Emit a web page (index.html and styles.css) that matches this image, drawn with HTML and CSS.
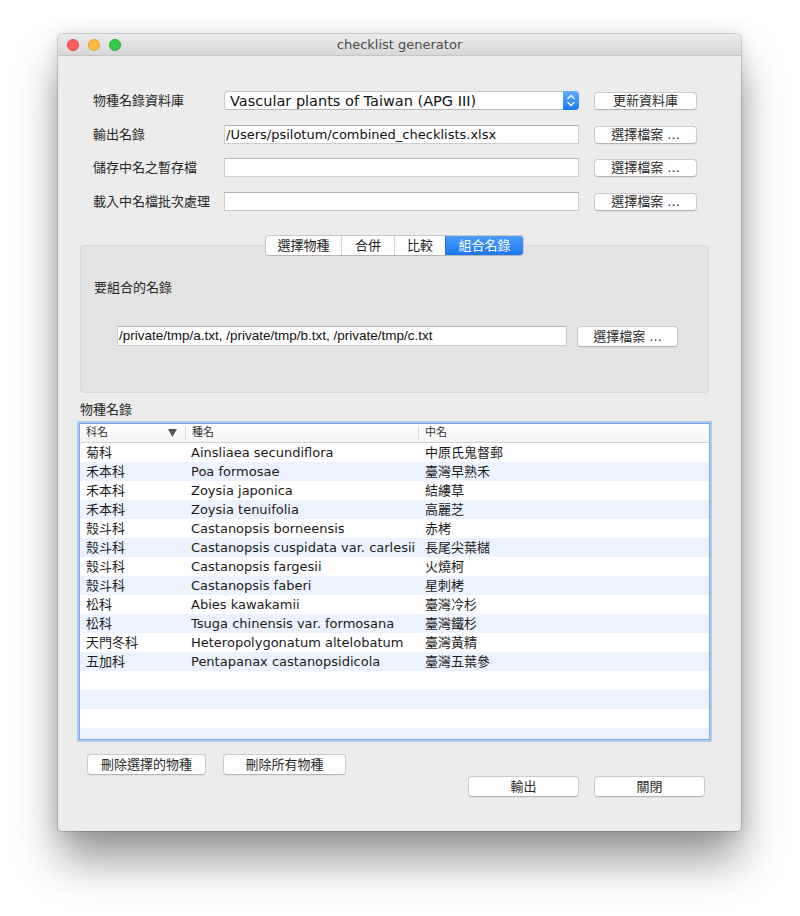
FILE: index.html
```html
<!DOCTYPE html>
<html lang="zh-Hant">
<head>
<meta charset="utf-8">
<title>checklist generator</title>
<link rel="stylesheet" href="styles.css">
</head>
<body>
<div class="window">
  <div class="titlebar">
    <div class="lights">
      <span class="light red"></span>
      <span class="light yellow"></span>
      <span class="light green"></span>
    </div>
    <div class="title">checklist generator</div>
    <div></div>
  </div>
  <div class="content">
    <div class="form">
      <div class="label">物種名錄資料庫</div>
      <div class="popup">
        <span class="popup-text">Vascular plants of Taiwan (APG III)</span>
        <span class="stepper">
          <svg width="16" height="19" viewBox="0 0 16 19"><path d="M5 7.5 L8 4.5 L11 7.5 M5 11.5 L8 14.5 L11 11.5" fill="none" stroke="#fff" stroke-width="1.4" stroke-linecap="round" stroke-linejoin="round"/></svg>
        </span>
      </div>
      <button class="btn form-btn">更新資料庫</button>

      <div class="label">輸出名錄</div>
      <div class="field">/Users/psilotum/combined_checklists.xlsx</div>
      <button class="btn form-btn">選擇檔案 ...</button>

      <div class="label">儲存中名之暫存檔</div>
      <div class="field"></div>
      <button class="btn form-btn">選擇檔案 ...</button>

      <div class="label">載入中名檔批次處理</div>
      <div class="field"></div>
      <button class="btn form-btn">選擇檔案 ...</button>
    </div>

    <div class="tabs">
      <div class="seg-wrap">
        <div class="seg">
          <span class="seg-item w1">選擇物種</span>
          <span class="seg-item w2">合併</span>
          <span class="seg-item w3">比較</span>
          <span class="seg-item w4 on">組合名錄</span>
        </div>
      </div>
      <div class="tabpanel">
        <div class="panel-label">要組合的名錄</div>
        <div class="panel-row">
          <div class="field panel-field">/private/tmp/a.txt, /private/tmp/b.txt, /private/tmp/c.txt</div>
          <button class="btn panel-btn">選擇檔案 ...</button>
        </div>
      </div>
    </div>

    <div class="list-label">物種名錄</div>
    <div class="table">
      <div class="thead">
        <div class="th th1"><span>科名</span><svg width="9" height="8" viewBox="0 0 9 8"><polygon points="0,0 9,0 4.5,8" fill="#555"/></svg></div>
        <div class="th th2">種名</div>
        <div class="th th3">中名</div>
      </div>
      <div class="rows">
        <div class="row"><span>菊科</span><span>Ainsliaea secundiflora</span><span>中原氏鬼督郵</span></div>
        <div class="row"><span>禾本科</span><span>Poa formosae</span><span>臺灣早熟禾</span></div>
        <div class="row"><span>禾本科</span><span>Zoysia japonica</span><span>結縷草</span></div>
        <div class="row"><span>禾本科</span><span>Zoysia tenuifolia</span><span>高麗芝</span></div>
        <div class="row"><span>殼斗科</span><span>Castanopsis borneensis</span><span>赤栲</span></div>
        <div class="row"><span>殼斗科</span><span>Castanopsis cuspidata var. carlesii</span><span>長尾尖葉櫧</span></div>
        <div class="row"><span>殼斗科</span><span>Castanopsis fargesii</span><span>火燒柯</span></div>
        <div class="row"><span>殼斗科</span><span>Castanopsis faberi</span><span>星刺栲</span></div>
        <div class="row"><span>松科</span><span>Abies kawakamii</span><span>臺灣冷杉</span></div>
        <div class="row"><span>松科</span><span>Tsuga chinensis var. formosana</span><span>臺灣鐵杉</span></div>
        <div class="row"><span>天門冬科</span><span>Heteropolygonatum altelobatum</span><span>臺灣黃精</span></div>
        <div class="row"><span>五加科</span><span>Pentapanax castanopsidicola</span><span>臺灣五葉參</span></div>
        <div class="row"><span></span><span></span><span></span></div>
        <div class="row"><span></span><span></span><span></span></div>
        <div class="row"><span></span><span></span><span></span></div>
        <div class="row"><span></span><span></span><span></span></div>
      </div>
    </div>

    <div class="actions">
      <div class="actions-left">
        <button class="btn del1">刪除選擇的物種</button>
        <button class="btn del2">刪除所有物種</button>
      </div>
      <div class="actions-right">
        <button class="btn out">輸出</button>
        <button class="btn close">關閉</button>
      </div>
    </div>
  </div>
</div>
</body>
</html>
```

FILE: styles.css
```css
html, body {
  margin: 0;
  padding: 0;
  background: #ffffff;
}

body {
  font-family: "DejaVu Sans", "Noto Sans CJK TC", sans-serif;
  font-size: 13px;
  color: #141414;
  min-height: 916px;
  padding-top: 34px;
  box-sizing: border-box;
}

.window {
  margin: 0 0 0 58px;
  width: 683px;
  height: 797px;
  background: #ececec;
  border-radius: 5px 5px 4px 4px;
  box-shadow: 0 0 0 1px rgba(0, 0, 0, 0.14), 0 0 18px rgba(0, 0, 0, 0.12), 0 30px 45px -2px rgba(0, 0, 0, 0.42);
  overflow: hidden;
  display: flex;
  flex-direction: column;
}

.titlebar {
  height: 21px;
  flex: none;
  border-bottom: 1px solid #c6c6c6;
  background: linear-gradient(#ebebeb, #d8d8d8);
  display: grid;
  grid-template-columns: 1fr auto 1fr;
  align-items: center;
}

.lights {
  display: flex;
  gap: 9px;
  padding-left: 9px;
}

.light {
  width: 12px;
  height: 12px;
  border-radius: 50%;
  box-sizing: border-box;
}

.red { background: #fc605c; border: 1px solid #e04944; }
.yellow { background: #fdbc40; border: 1px solid #dfa136; }
.green { background: #34c84a; border: 1px solid #26a934; }

.title {
  font-size: 13px;
  color: #4b4b4b;
  line-height: 21px;
}

.content {
  flex: 1;
}

/* top form */
.form {
  display: grid;
  grid-template-columns: 116px 355px 103px;
  grid-auto-rows: 19px;
  column-gap: 15px;
  row-gap: 14.5px;
  align-items: center;
  padding: 35px 0 0 35px;
}

.label {
  color: #262626;
  line-height: 19px;
  white-space: nowrap;
}

.popup {
  height: 19px;
  box-sizing: border-box;
  display: flex;
  align-items: center;
  background: #fff;
  border: 1px solid #c9c9c9;
  border-bottom-color: #b8b8b8;
  border-radius: 4px;
}

.popup-text {
  flex: 1;
  padding-left: 5px;
  font-size: 14.5px;
  color: #111;
  white-space: nowrap;
  overflow: hidden;
}

.stepper {
  width: 16px;
  height: 19px;
  margin: -1px -1px -1px 0;
  border-radius: 0 4px 4px 0;
  background: linear-gradient(#62aefb, #1a7af6);
  display: flex;
}

.field {
  height: 19px;
  box-sizing: border-box;
  background: #fff;
  border: 1px solid #cdcdcd;
  border-top-color: #b3b3b3;
  padding-left: 1px;
  line-height: 17px;
  color: #111;
  white-space: nowrap;
  overflow: hidden;
}

.btn {
  font-family: "DejaVu Sans", "Noto Sans CJK TC", sans-serif;
  font-size: 13px;
  color: #2a2a2a;
  background: #fff;
  border: 1px solid #cbcbcb;
  border-bottom-color: #b3b3b3;
  border-radius: 4px;
  padding: 0;
  box-sizing: border-box;
  box-shadow: 0 1px 0 rgba(0, 0, 0, 0.04);
  white-space: nowrap;
}

.form-btn {
  height: 18px;
  line-height: 16px;
  margin-top: 1px;
}

/* tabs */
.tabs {
  margin: 24px 32px 0 22px;
}

.seg-wrap {
  display: flex;
  justify-content: center;
  position: relative;
  z-index: 1;
}

.seg {
  display: flex;
  height: 21px;
  box-sizing: border-box;
  background: #fff;
  border: 1px solid #c6c6c6;
  border-bottom-color: #b5b5b5;
  border-radius: 4px;
  overflow: hidden;
}

.seg-item {
  text-align: center;
  line-height: 19px;
  color: #1e1e1e;
  border-left: 1px solid #d4d4d4;
}

.seg-item.w1 { width: 75px; border-left: none; }
.seg-item.w2 { width: 52px; }
.seg-item.w3 { width: 50px; }
.seg-item.w4 { width: 77px; }

.seg-item.on {
  background: linear-gradient(#4c9cf8, #1b77f3);
  color: #fff;
  border-left-color: #1b77f3;
}

.tabpanel {
  margin-top: -11px;
  background: #e3e3e3;
  border: 1px solid #d9d9d9;
  border-radius: 4px;
  padding: 34px 0 45px 0;
}

.panel-label {
  line-height: 16px;
  color: #262626;
  padding-left: 13px;
}

.panel-row {
  display: flex;
  align-items: center;
  gap: 10px;
  margin: 30px 0 0 36px;
}

.panel-field {
  width: 450px;
  height: 20px;
  line-height: 18px;
  font-family: "Liberation Sans", "Noto Sans CJK TC", sans-serif;
  font-size: 13.5px;
}

.panel-btn {
  width: 101px;
  height: 21px;
  line-height: 19px;
}

/* list */
.list-label {
  margin: 9px 0 0 22px;
  line-height: 16px;
  color: #262626;
}

.table {
  margin: 5px 0 0 21px;
  width: 631px;
  height: 317px;
  box-sizing: border-box;
  background: #fff;
  border: 1px solid #78aae6;
  box-shadow: 0 0 0 2px rgba(125, 176, 238, 0.55);
  overflow: hidden;
}

.thead {
  display: grid;
  grid-template-columns: 105px 233px 1fr;
  height: 19px;
  box-sizing: border-box;
  border-bottom: 1px solid #d2d2d2;
  background: linear-gradient(#ffffff, #f4f4f4);
  font-size: 11px;
  color: #333;
}

.th {
  line-height: 18px;
  padding-left: 6px;
}

.th2, .th3 {
  border-left: 1px solid #dcdcdc;
  margin: 2px 0;
  line-height: 14px;
}

.th1 {
  display: flex;
  align-items: center;
  justify-content: space-between;
  padding-right: 8px;
}

.row {
  display: grid;
  grid-template-columns: 105px 233px 1fr;
  height: 19px;
  line-height: 19px;
  color: #1a1a1a;
  white-space: nowrap;
}

.row:nth-child(even) {
  background: #edf3fe;
}

.row span {
  padding-left: 6px;
  overflow: hidden;
}

.row span:nth-child(3) {
  padding-left: 7px;
}

/* bottom actions */
.actions {
  margin-top: 14px;
}

.actions-left {
  display: flex;
  gap: 17px;
  padding-left: 29px;
}

.actions-right {
  display: flex;
  justify-content: flex-end;
  gap: 15px;
  padding-right: 36px;
  margin-top: 1px;
}

.actions .btn {
  height: 21px;
  line-height: 19px;
}

.del1 { width: 119px; }
.del2 { width: 123px; }
.out { width: 111px; }
.close { width: 111px; }
```
